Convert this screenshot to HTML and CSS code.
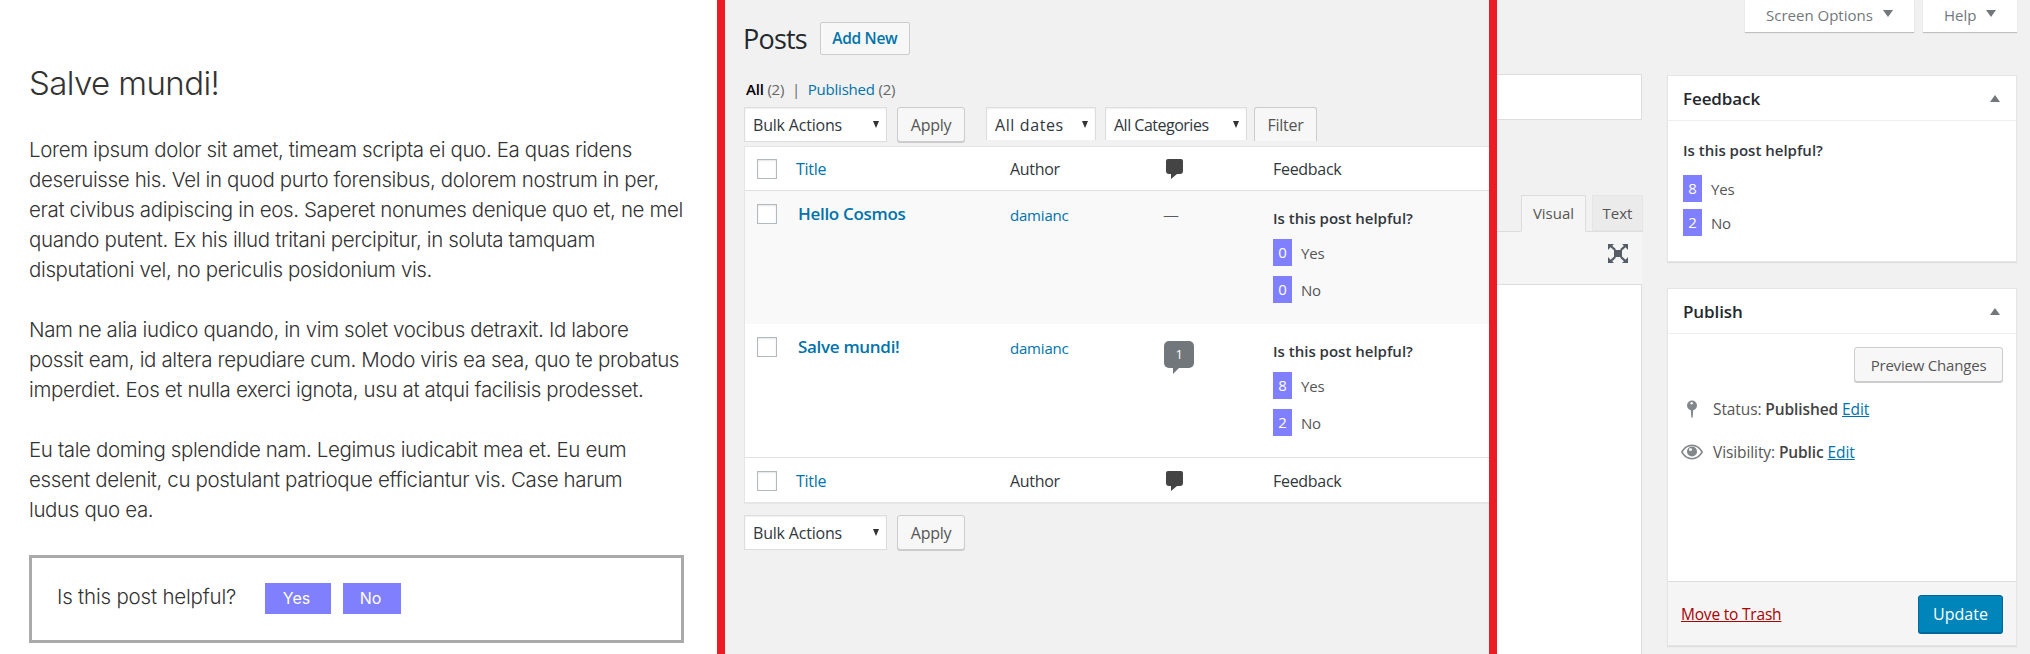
FILE: index.html
```html
<!DOCTYPE html>
<html lang="en">

<head>
    <meta charset="UTF-8" />
    <meta name="viewport" content="width=device-width, initial-scale=1.0" />
    <title>Post feedback</title>
    <link rel="stylesheet" href="styles.css">
</head>

<body>

    <!-- front end post -->
    <article class="post">
        <h2>Salve mundi!</h2>
        <p>Lorem ipsum dolor sit amet, timeam scripta ei quo. Ea quas ridens<br>deseruisse his. Vel in quod purto forensibus, dolorem nostrum in per,<br>erat civibus adipiscing in eos. Saperet nonumes denique quo et, ne mel<br>quando putent. Ex his illud tritani percipitur, in soluta tamquam<br>disputationi vel, no periculis posidonium vis.</p>
        <p>Nam ne alia iudico quando, in vim solet vocibus detraxit. Id labore<br>possit eam, id altera repudiare cum. Modo viris ea sea, quo te probatus<br>imperdiet. Eos et nulla exerci ignota, usu at atqui facilisis prodesset.</p>
        <p>Eu tale doming splendide nam. Legimus iudicabit mea et. Eu eum<br>essent delenit, cu postulant patrioque efficiantur vis. Case harum<br>ludus quo ea.</p>
        <div class="vote-box">
            <span class="vote-label">Is this post helpful?</span>
            <button class="vote-btn vote-yes">Yes</button>
            <button class="vote-btn vote-no">No</button>
        </div>
    </article>

    <!-- posts list -->
    <section class="posts">
        <div class="posts-head">
            <h1>Posts</h1>
            <a class="add-new">Add New</a>
        </div>
        <div class="subsub"><b>All</b> <i>(2)</i> <span class="sep">|</span> <a>Published</a> <i>(2)</i></div>
        <div class="tablenav">
            <div class="select select-bulk">Bulk Actions</div>
            <button class="btn btn-apply">Apply</button>
            <div class="select select-dates select-cut">All dates</div>
            <div class="select select-cats select-cut">All Categories</div>
            <button class="btn btn-filter">Filter</button>
        </div>

        <div class="list">
            <div class="row row-head">
                <span class="check"></span>
                <a>Title</a>
                <span>Author</span>
                <svg class="bubble-icon" viewBox="0 0 17 20"><path d="M2 0h13a2 2 0 0 1 2 2v10a3 3 0 0 1-3 3h-3l-6 5v-5H3a3 3 0 0 1-3-3V2a2 2 0 0 1 2-2z"/></svg>
                <span>Feedback</span>
            </div>
            <div class="row row-post row-alt">
                <span class="check"></span>
                <a class="post-title">Hello Cosmos</a>
                <a class="post-author">damianc</a>
                <span class="no-comments">—</span>
                <div class="feedback">
                    <div class="feedback-q">Is this post helpful?</div>
                    <div class="count-row"><span class="count">0</span>Yes</div>
                    <div class="count-row"><span class="count">0</span>No</div>
                </div>
            </div>
            <div class="row row-post">
                <span class="check"></span>
                <a class="post-title">Salve mundi!</a>
                <a class="post-author">damianc</a>
                <span class="comment-count">1</span>
                <div class="feedback">
                    <div class="feedback-q">Is this post helpful?</div>
                    <div class="count-row"><span class="count">8</span>Yes</div>
                    <div class="count-row"><span class="count">2</span>No</div>
                </div>
            </div>
            <div class="row row-foot">
                <span class="check"></span>
                <a>Title</a>
                <span>Author</span>
                <svg class="bubble-icon" viewBox="0 0 17 20"><path d="M2 0h13a2 2 0 0 1 2 2v10a3 3 0 0 1-3 3h-3l-6 5v-5H3a3 3 0 0 1-3-3V2a2 2 0 0 1 2-2z"/></svg>
                <span>Feedback</span>
            </div>
        </div>

        <div class="tablenav tablenav-bottom">
            <div class="select select-bulk">Bulk Actions</div>
            <button class="btn btn-apply">Apply</button>
        </div>
    </section>

    <!-- edit post screen -->
    <section class="edit">
        <div class="screen-meta">
            <div class="meta-tab meta-options">Screen Options<span class="arrow-down"></span></div>
            <div class="meta-tab meta-help">Help<span class="arrow-down"></span></div>
        </div>
        <div class="edit-cols">
            <div class="editor">
                <div class="title-input"></div>
                <div class="editor-tabs">
                    <span class="tab tab-visual">Visual</span>
                    <span class="tab tab-text">Text</span>
                </div>
                <div class="editor-toolbar">
                    <svg class="fullscreen" viewBox="0 0 20 19"><path d="M6 6h8v7H6z"/><path d="M0 0h6L4.2 1.8 8 5.2 6.4 6.8 2.6 3.2 0 6zM20 0v6l-2.4-2.8-3.9 3.6-1.6-1.6 3.8-3.4L14 0zM0 19v-6l2.6 2.8 3.8-3.6L8 13.8l-3.8 3.4L6 19zM20 19h-6l1.9-1.8-3.8-3.4 1.6-1.6 3.9 3.6L20 13z"/></svg>
                </div>
                <div class="editor-body"></div>
            </div>

            <aside class="side">
                <div class="metabox metabox-feedback">
                    <div class="metabox-head"><span>Feedback</span><i class="arrow-up"></i></div>
                    <div class="metabox-body">
                        <div class="side-q">Is this post helpful?</div>
                        <div class="count-row"><span class="count">8</span>Yes</div>
                        <div class="count-row"><span class="count">2</span>No</div>
                    </div>
                </div>

                <div class="metabox metabox-publish">
                    <div class="metabox-head"><span>Publish</span><i class="arrow-up"></i></div>
                    <div class="publish-body">
                        <div class="preview-wrap"><button class="btn btn-preview">Preview Changes</button></div>
                        <div class="misc misc-status">
                            <svg class="misc-icon" viewBox="0 0 22 20"><circle cx="11" cy="6" r="5.500"/><path d="M9.600 10h2.800l-.6 9.500h-1.600z"/><circle cx="10.600" cy="3.600" r="1.300" fill="#fff"/></svg>
                            <span>Status: <b>Published</b> <a>Edit</a></span>
                        </div>
                        <div class="misc misc-visibility">
                            <svg class="misc-icon" viewBox="0 0 22 16"><path fill-rule="evenodd" d="M11 0.500c4.600 0 8.600 2.900 11 7.500-2.400 4.600-6.400 7.500-11 7.500S2.400 12.600 0 8C2.400 3.400 6.400 0.500 11 0.500zM11 2C7.300 2 4 4.300 1.800 8 4 11.700 7.300 14 11 14s7-2.300 9.200-6C18 4.300 14.700 2 11 2z"/><circle cx="11" cy="7.500" r="5"/><circle cx="9.500" cy="5.500" r="1.500" fill="#fff"/></svg>
                            <span>Visibility: <b>Public</b> <a>Edit</a></span>
                        </div>
                    </div>
                    <div class="publish-actions">
                        <a class="trash">Move to Trash</a>
                        <button class="btn-update">Update</button>
                    </div>
                </div>
            </aside>
        </div>
    </section>

</body>

</html>
```

FILE: styles.css
```css
* {
    box-sizing: border-box;
}

body {
    margin: 0;
    height: 654px;
    overflow: hidden;
    display: flex;
    background-color: #f1f1f1;
    font-family: "Open Sans", sans-serif;
    font-size: 14px;
    color: #444;
}

a {
    color: #0073aa;
}

button {
    font-family: inherit;
}

/* front end post */
.post {
    width: 717px;
    flex-shrink: 0;
    padding: 0 33px 0 29px;
    background-color: #fff;
    font-family: Inter, sans-serif;
    font-weight: 300;
    font-size: 20.500px;
    letter-spacing: -0.37px;
    line-height: 30px;
    color: #333;
}

.post h2 {
    margin: 63px 0 0;
    font-size: 33px;
    line-height: 40px;
    font-weight: 300;
    letter-spacing: -0.6px;
}

.post p {
    margin: 30px 0 0;
    white-space: nowrap;
}

.post h2 + p {
    margin-top: 32px;
}

.vote-box {
    display: flex;
    align-items: center;
    height: 88px;
    margin-top: 30px;
    padding: 0 0 0 25px;
    border: 3px solid #aaa;
}

.vote-label {
    margin: 0 29px 4px 0;
    letter-spacing: -0.2px;
    white-space: nowrap;
}

.vote-btn {
    height: 31px;
    margin-bottom: 2px;
    padding: 0 3px 0 0;
    border: none;
    background-color: #8080ff;
    color: #fff;
    font-family: Inter, sans-serif;
    font-size: 16px;
}

.vote-yes {
    width: 66px;
    margin-right: 12px;
}

.vote-no {
    width: 58px;
}

/* posts list */
.posts {
    width: 780px;
    flex-shrink: 0;
    padding: 22px 0 0 19px;
    border-left: 8px solid #ed1c24;
    border-right: 8px solid #ed1c24;
    overflow: hidden;
}

.posts-head {
    display: flex;
    align-items: center;
    height: 33px;
}

.posts-head h1 {
    margin: 0 13px 0 -1px;
    font-size: 27px;
    font-weight: 400;
    letter-spacing: -0.8px;
    color: #23282d;
}

.add-new {
    width: 90px;
    height: 33px;
    border: 1px solid #ccc;
    border-radius: 2px;
    background-color: #f7f7f7;
    font-size: 15.500px;
    font-weight: 600;
    line-height: 31px;
    text-align: center;
    letter-spacing: -0.3px;
}

.subsub {
    height: 20px;
    margin: 24px 0 8px 2px;
    font-size: 15px;
    line-height: 20px;
    letter-spacing: -0.2px;
}

.subsub b {
    font-weight: 600;
    color: #000;
}

.subsub i {
    font-style: normal;
    color: #666;
}

.subsub .sep {
    margin: 0 4px;
    color: #666;
}

.tablenav {
    display: flex;
    align-items: flex-start;
    height: 39px;
}

.select {
    position: relative;
    height: 35px;
    padding-left: 8px;
    border: 1px solid #ddd;
    background-color: #fff;
    box-shadow: inset 0 1px 2px rgba(0, 0, 0, 0.07);
    font-size: 16px;
    line-height: 34px;
    letter-spacing: -0.2px;
    color: #32373c;
}

.select::after {
    content: "";
    position: absolute;
    right: 7px;
    top: 13px;
    border-left: 3.500px solid transparent;
    border-right: 3.500px solid transparent;
    border-top: 7px solid #333;
}

.select-cut {
    height: 33px;
    border-bottom: none;
}

.select-bulk {
    width: 143px;
    margin-right: 10px;
}

.select-dates {
    width: 110px;
    margin-right: 9px;
    letter-spacing: 0.6px;
}

.select-cats {
    width: 142px;
    margin-right: 7px;
    letter-spacing: -0.5px;
}

.btn {
    height: 35px;
    padding: 0;
    border: 1px solid #ccc;
    border-radius: 3px;
    background-color: #f7f7f7;
    box-shadow: 0 1px 0 #ccc;
    font-size: 16px;
    letter-spacing: -0.3px;
    color: #555;
}

.btn-apply {
    width: 68px;
    margin-right: 21px;
}

.btn-filter {
    width: 63px;
    height: 34px;
    border-bottom: none;
    box-shadow: none;
    border-radius: 3px 3px 0 0;
}

.tablenav-bottom {
    margin-top: 12px;
}

.list {
    margin-right: -1px;
    border: 1px solid #e5e5e5;
    background-color: #fff;
    box-shadow: 0 1px 1px rgba(0, 0, 0, 0.04);
}

.row {
    display: grid;
    grid-template-columns: 39px 214px 153px 110px 1fr;
    padding-left: 12px;
    font-size: 16px;
    letter-spacing: -0.3px;
    color: #32373c;
}

.row-head,
.row-foot {
    height: 44px;
    align-items: center;
}

.row-head {
    border-bottom: 1px solid #e1e1e1;
}

.row-foot {
    border-top: 1px solid #e1e1e1;
    height: 45px;
    padding-top: 1px;
}

.row-post {
    align-items: start;
    height: 133px;
    padding-top: 13px;
}

.row-alt {
    background-color: #f9f9f9;
}

.check {
    width: 20px;
    height: 20px;
    border: 1px solid #b4b9be;
    background-color: #fff;
    box-shadow: inset 0 1px 2px rgba(0, 0, 0, 0.1);
}

.bubble-icon {
    width: 17px;
    height: 20px;
    margin-left: 3px;
    fill: #444;
}

.post-title {
    padding-left: 2px;
    font-size: 17px;
    font-weight: 600;
    line-height: 20px;
    letter-spacing: -0.3px;
}

.post-author {
    font-size: 15px;
    line-height: 22px;
    letter-spacing: -0.2px;
}

.no-comments {
    font-weight: 300;
    line-height: 22px;
}

.comment-count {
    position: relative;
    width: 30px;
    height: 27px;
    margin: 4px 0 0 1px;
    border-radius: 5px;
    background-color: #72777c;
    color: #fff;
    font-size: 13px;
    line-height: 27px;
    text-align: center;
}

.comment-count::after {
    content: "";
    position: absolute;
    left: 9px;
    top: 26px;
    border-top: 7px solid #72777c;
    border-right: 7px solid transparent;
}

.feedback-q,
.side-q {
    font-size: 15px;
    font-weight: 600;
    line-height: 20px;
    letter-spacing: 0;
    color: #32373c;
}

.feedback-q {
    margin: 4px 0 11px;
}

.count-row {
    display: flex;
    align-items: center;
    height: 27px;
    margin-bottom: 10px;
    font-size: 15px;
    letter-spacing: -0.2px;
    color: #555;
}

.count {
    width: 19px;
    height: 27px;
    margin-right: 9px;
    background-color: #8080ff;
    color: #fff;
    font-size: 15px;
    line-height: 27px;
    text-align: center;
}

/* edit post screen */
.edit {
    flex: 1;
    min-width: 0;
}

.screen-meta {
    display: flex;
    justify-content: flex-end;
    gap: 9px;
    height: 32px;
    padding-right: 13px;
}

.meta-tab {
    display: flex;
    align-items: center;
    height: 32px;
    padding-bottom: 2px;
    background-color: #fff;
    box-shadow: 0 1px 1px rgba(0, 0, 0, 0.2);
    font-size: 15px;
    color: #72777c;
}

.meta-options {
    width: 169px;
    padding-left: 21px;
}

.meta-help {
    width: 94px;
    padding-left: 21px;
}

.arrow-down {
    margin: -3px 0 0 10px;
    border-left: 5px solid transparent;
    border-right: 5px solid transparent;
    border-top: 7px solid #72777c;
}

.edit-cols {
    display: flex;
    margin-top: 42px;
}

.editor {
    display: flex;
    flex-direction: column;
    width: 145px;
    height: 580px;
}

.title-input {
    height: 46px;
    border: 1px solid #ddd;
    border-left: none;
    background-color: #fff;
}

.editor-tabs {
    display: flex;
    justify-content: flex-end;
    gap: 6px;
    height: 37px;
    margin: 75px -1px 0 0;
    border-bottom: 1px solid #ddd;
}

.tab {
    height: 37px;
    border: 1px solid #e5e5e5;
    background-color: #ebebeb;
    font-size: 15px;
    line-height: 35px;
    text-align: center;
    color: #555;
}

.tab-visual {
    width: 65px;
    background-color: #f5f5f5;
    border-color: #ddd;
    border-bottom-color: #f5f5f5;
}

.tab-text {
    width: 51px;
    height: 36px;
}

.editor-toolbar {
    display: flex;
    justify-content: flex-end;
    height: 52px;
    padding: 12px 14px 0 0;
    background-color: #f5f5f5;
}

.fullscreen {
    width: 20px;
    height: 19px;
    fill: #555d66;
}

.editor-body {
    flex: 1;
    border-top: 1px solid #ddd;
    border-right: 1px solid #ddd;
    background-color: #fff;
}

.side {
    width: 350px;
    margin: 1px 0 0 25px;
}

.metabox {
    border: 1px solid #e5e5e5;
    background-color: #fff;
    box-shadow: 0 1px 1px rgba(0, 0, 0, 0.08);
}

.metabox-feedback {
    height: 187px;
    margin-bottom: 26px;
}

.metabox-publish {
    height: 358px;
}

.metabox-head {
    display: flex;
    justify-content: space-between;
    align-items: center;
    height: 45px;
    padding: 0 16px 0 15px;
    border-bottom: 1px solid #eee;
    font-size: 17px;
    font-weight: 600;
    letter-spacing: -0.1px;
    color: #23282d;
}

.arrow-up {
    border-left: 5px solid transparent;
    border-right: 5px solid transparent;
    border-bottom: 7px solid #72777c;
}

.metabox-body {
    padding: 19px 15px 0;
}

.metabox-body .count-row {
    margin-bottom: 7px;
}

.side-q {
    margin: 0 0 15px;
}

.publish-body {
    height: 247px;
    padding: 13px 13px 0;
}

.preview-wrap {
    display: flex;
    justify-content: flex-end;
}

.btn-preview {
    width: 149px;
    font-size: 15px;
    letter-spacing: -0.2px;
}

.misc {
    display: flex;
    align-items: center;
    height: 22px;
    font-size: 15.500px;
    letter-spacing: -0.1px;
    color: #555;
}

.misc b {
    font-weight: 600;
    color: #444;
}

.misc a {
    text-decoration: underline;
}

.misc-status {
    margin-top: 16px;
}

.misc-visibility {
    margin-top: 21px;
}

.misc-icon {
    width: 22px;
    height: 18px;
    margin: 0 10px 0 0;
    fill: #82878c;
}

.publish-actions {
    display: flex;
    justify-content: space-between;
    align-items: center;
    height: 64px;
    padding: 0 13px;
    border-top: 1px solid #ddd;
    background-color: #f5f5f5;
}

.trash {
    font-size: 15.500px;
    letter-spacing: -0.2px;
    text-decoration: underline;
    color: #a00;
}

.btn-update {
    width: 85px;
    height: 38px;
    border: 1px solid #006799;
    border-radius: 3px;
    background-color: #0085ba;
    box-shadow: 0 1px 0 #006799;
    font-size: 16px;
    color: #fff;
}
```
